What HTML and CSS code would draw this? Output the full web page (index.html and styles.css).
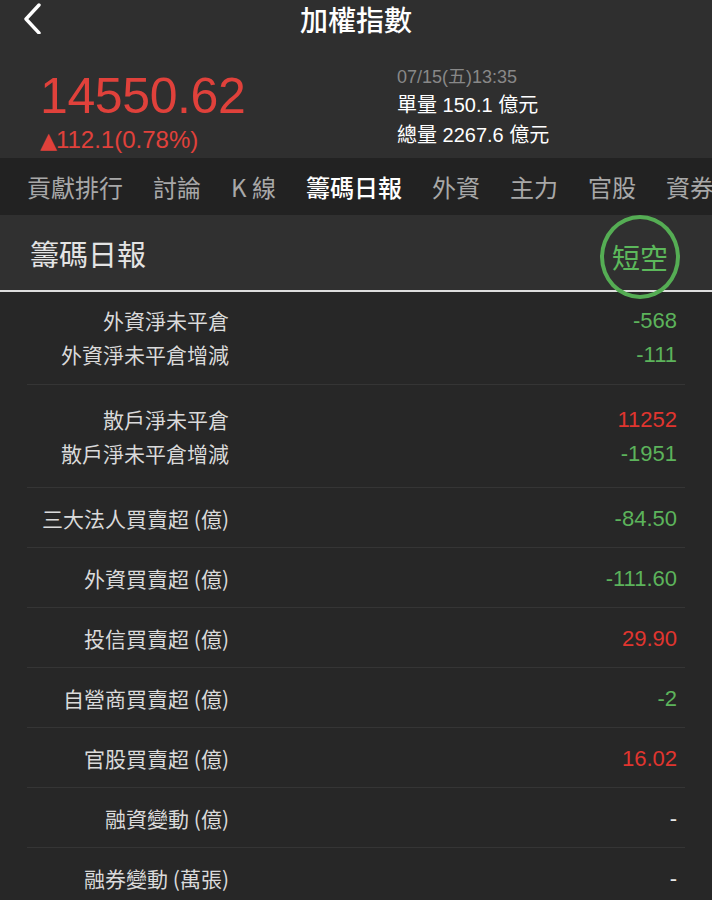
FILE: index.html
```html
<!DOCTYPE html>
<html lang="zh-Hant">
  <head>
    <meta charset="UTF-8" />
    <meta name="viewport" content="width=device-width, initial-scale=1.0" />
    <title>加權指數</title>
    <link rel="stylesheet" href="styles.css">
  </head>
  <body>
    <div class="header">
      <div class="nav-bar">
        <span class="back">
          <svg width="22" height="32" viewBox="0 0 22 32">
            <path d="M18 3 L5 17 L18 31" fill="none" stroke="#fff" stroke-width="3.4" stroke-linecap="round" stroke-linejoin="round" />
          </svg>
        </span>
        <span class="title">加權指數</span>
      </div>
      <div class="quote">
        <div class="price-area">
          <div class="price">14550.62</div>
          <div class="change"><span class="arrow">▲</span>112.1(0.78%)</div>
        </div>
        <div class="info-area">
          <div class="time">07/15(五)13:35</div>
          <div class="volume">單量 150.1 億元</div>
          <div class="volume">總量 2267.6 億元</div>
        </div>
      </div>
    </div>

    <div class="tabs">
      <span class="tab">貢獻排行</span>
      <span class="tab">討論</span>
      <span class="tab">K 線</span>
      <span class="tab active">籌碼日報</span>
      <span class="tab">外資</span>
      <span class="tab">主力</span>
      <span class="tab">官股</span>
      <span class="tab">資券</span>
    </div>

    <div class="section-head">
      <span class="section-title">籌碼日報</span>
      <span class="badge">短空</span>
    </div>

    <div class="list">
      <div class="group first">
        <div class="row"><span class="label">外資淨未平倉</span><span class="value down">-568</span></div>
        <div class="row"><span class="label">外資淨未平倉增減</span><span class="value down">-111</span></div>
      </div>
      <div class="group">
        <div class="row"><span class="label">散戶淨未平倉</span><span class="value up">11252</span></div>
        <div class="row"><span class="label">散戶淨未平倉增減</span><span class="value down">-1951</span></div>
      </div>
      <div class="single">
        <span class="label">三大法人買賣超 (億)</span><span class="value down">-84.50</span>
      </div>
      <div class="single">
        <span class="label">外資買賣超 (億)</span><span class="value down">-111.60</span>
      </div>
      <div class="single">
        <span class="label">投信買賣超 (億)</span><span class="value up">29.90</span>
      </div>
      <div class="single">
        <span class="label">自營商買賣超 (億)</span><span class="value down">-2</span>
      </div>
      <div class="single">
        <span class="label">官股買賣超 (億)</span><span class="value up">16.02</span>
      </div>
      <div class="single">
        <span class="label">融資變動 (億)</span><span class="value">-</span>
      </div>
      <div class="single">
        <span class="label">融券變動 (萬張)</span><span class="value">-</span>
      </div>
    </div>
  </body>
</html>
```

FILE: styles.css
```css
html {
  background: #272727;
}
body {
  margin: 0;
  width: 712px;
  height: 900px;
  overflow: hidden;
  font-family: "Liberation Sans", "Noto Sans CJK TC", sans-serif;
  color: #dcdcdc;
}
.header {
  background: #2f2f2f;
  height: 158px;
  box-sizing: border-box;
}
.nav-bar {
  position: relative;
  height: 38px;
  display: flex;
  justify-content: center;
  align-items: center;
}
.back {
  position: absolute;
  left: 21px;
  top: 2px;
}
.title {
  font-family: "Noto Sans CJK TC", sans-serif;
  font-size: 28px;
  font-weight: 500;
  color: #fff;
}
.quote {
  display: flex;
  padding: 26px 0 0 40px;
}
.price-area {
  width: 357px;
}
.price {
  font-size: 50px;
  line-height: 50px;
  color: #e0413b;
  letter-spacing: -0.4px;
  margin-top: 7px;
}
.change {
  font-size: 24px;
  line-height: 30px;
  color: #e0413b;
  margin-top: 4px;
}
.arrow {
  font-family: "DejaVu Sans", sans-serif;
  font-size: 22px;
  margin-right: -1px;
}
.info-area {
  display: flex;
  flex-direction: column;
}
.time {
  font-size: 18px;
  line-height: 26px;
  color: #888;
}
.volume {
  font-size: 20px;
  line-height: 30px;
  color: #fff;
}
.tabs {
  background: #222;
  height: 57px;
  display: flex;
  align-items: center;
  gap: 30px;
  padding-left: 27px;
  white-space: nowrap;
  overflow: hidden;
}
.tab {
  font-family: "Noto Sans CJK TC", sans-serif;
  font-size: 24px;
  color: #a8a8a8;
  flex-shrink: 0;
}
.tab.active {
  color: #fff;
  font-weight: 500;
}
.section-head {
  background: #303030;
  height: 75px;
  display: flex;
  align-items: center;
  justify-content: space-between;
  padding: 0 30px;
  border-bottom: 2px solid #dedede;
}
.section-title {
  font-family: "Noto Sans CJK TC", sans-serif;
  font-size: 29px;
  color: #e4e4e4;
}
.badge {
  position: relative;
  top: 4px;
  width: 72px;
  height: 76px;
  border: 4px solid #55ad54;
  border-radius: 50%;
  display: flex;
  align-items: center;
  justify-content: center;
  font-family: "Noto Sans CJK TC", sans-serif;
  font-size: 28px;
  color: #5cb85b;
  margin-right: 2px;
}
.list {
  padding: 0 27px;
}
.group {
  padding: 17px 0;
  border-bottom: 1px solid #353535;
}
.group.first {
  padding: 11px 0 13px;
}
.row,
.single {
  display: flex;
  justify-content: space-between;
  align-items: center;
  height: 34px;
}
.single {
  height: 59px;
  border-bottom: 1px solid #353535;
}
.label {
  font-family: "Noto Sans CJK TC", sans-serif;
  font-size: 21px;
  width: 202px;
  text-align: right;
  color: #dadada;
}
.value {
  font-size: 22px;
  padding-right: 8px;
  padding-top: 2px;
  color: #e8e8e8;
}
.value.down {
  color: #5cb35b;
}
.value.up {
  color: #e0352f;
}
```
